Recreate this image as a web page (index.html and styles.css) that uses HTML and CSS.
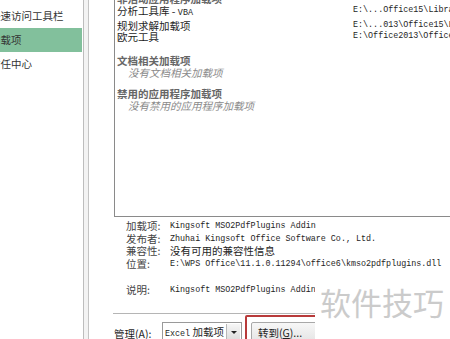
FILE: index.html
```html
<!DOCTYPE html>
<html lang="zh-CN">

<head>
    <meta charset="UTF-8" />
    <title>加载项</title>
    <link rel="stylesheet" href="styles.css">
</head>

<body>
    <div class="window">
        <div class="sidebar">
            <div class="nav-item">快速访问工具栏</div>
            <div class="nav-item active">加载项</div>
            <div class="nav-item">信任中心</div>
        </div>
        <div class="splitter"></div>

        <div class="main">
            <div class="addin-list">
                <div class="group-title">非活动应用程序加载项</div>
                <div class="row"><span>分析工具库 - <span class="mono">VBA</span></span><span class="mono">E:\...Office15\Library\Analysis</span></div>
                <div class="row"><span>规划求解加载项</span><span class="mono">E:\...013\Office15\Library</span></div>
                <div class="row"><span>欧元工具</span><span class="mono">E:\Office2013\Office15\Library</span></div>

                <div class="group-title spaced">文档相关加载项</div>
                <div class="empty">没有文档相关加载项</div>

                <div class="group-title spaced2">禁用的应用程序加载项</div>
                <div class="empty">没有禁用的应用程序加载项</div>
            </div>

            <div class="details">
                <span>加载项:</span><span class="mono">Kingsoft MSO2PdfPlugins Addin</span>
                <span>发布者:</span><span class="mono">Zhuhai Kingsoft Office Software Co., Ltd.</span>
                <span>兼容性:</span><span>没有可用的兼容性信息</span>
                <span>位置:</span><span class="mono">E:\WPS Office\11.1.0.11294\office6\kmso2pdfplugins.dll</span>
            </div>

            <div class="details desc">
                <span>说明:</span><span class="mono">Kingsoft MSO2PdfPlugins Addin</span>
            </div>

            <div class="separator"></div>

            <div class="manage">
                <span class="manage-label">管理(<u>A</u>):</span>
                <div class="select">
                    <span><span class="mono">Excel</span> 加载项</span>
                    <span class="arrow"></span>
                </div>
                <div class="highlight">
                    <button class="go-btn">转到(<u>G</u>)...</button>
                </div>
            </div>
        </div>

        <div class="watermark">软件技巧</div>
    </div>
</body>

</html>
```

FILE: styles.css
```css
body {
    margin: 0;
    background: #fff;
    font-family: "Noto Sans CJK SC", "DejaVu Sans", sans-serif;
    font-size: 10.5px;
    color: #1e1e1e;
}

.window {
    position: relative;
    display: flex;
    width: 450px;
    height: 339px;
    overflow: hidden;
}

.mono {
    font-family: "Liberation Mono", monospace;
    font-size: 8.4px;
}

/* left navigation */
.sidebar {
    width: 83px;
    flex-shrink: 0;
    border-right: 1px solid #bdbdbd;
    overflow: hidden;
    padding-top: 4px;
}

.nav-item {
    height: 24px;
    line-height: 24px;
    margin-left: -10px;
    white-space: nowrap;
    color: #333;
}

.nav-item.active {
    background: #82c09c;
    margin-right: 1px;
}

.splitter {
    width: 4px;
    flex-shrink: 0;
    background: #f3f3f3;
    border-right: 1px solid #c4c4c4;
}

/* main panel */
.main {
    flex: 1;
    min-width: 0;
    padding-left: 25px;
}

.addin-list {
    box-sizing: border-box;
    height: 225px;
    margin-top: -8px;
    padding: 1px 0 0 2px;
    border-left: 1px solid #8a8a8a;
    border-bottom: 1px solid #8a8a8a;
    white-space: nowrap;
}

.group-title {
    line-height: 12px;
    font-weight: bold;
    color: #666;
}

.group-title.spaced {
    margin-top: 12px;
}

.group-title.spaced2 {
    margin-top: 9px;
}

.row {
    display: grid;
    grid-template-columns: 236px 1fr;
    line-height: 11.5px;
}

.empty {
    line-height: 12px;
    padding-left: 11px;
    font-style: italic;
    color: #8a8a8a;
}

.details {
    display: grid;
    grid-template-columns: 44px 1fr;
    line-height: 12.7px;
    margin: 3px 0 0 12px;
    white-space: nowrap;
}

.details > span:nth-child(odd) {
    color: #444;
}

.details.desc {
    margin-top: 13px;
}

.separator {
    height: 1px;
    background: #b5b5b5;
    margin: 16px 0 0 -1px;
}

.manage {
    display: flex;
    align-items: flex-start;
}

.manage-label {
    margin-top: 12px;
    width: 48px;
}

u {
    text-decoration: underline;
}

.select {
    display: flex;
    align-items: center;
    justify-content: space-between;
    box-sizing: border-box;
    width: 80px;
    height: 20px;
    margin-top: 8px;
    padding-left: 2px;
    border: 1px solid #9a9a9a;
    background: #fff;
}

.arrow {
    width: 13px;
    height: 16px;
    margin-right: 1px;
    background: linear-gradient(#f6f6f6, #dcdcdc);
    border-left: 1px solid #b8b8b8;
    position: relative;
}

.arrow::after {
    content: "";
    position: absolute;
    left: 4px;
    top: 7px;
    border-left: 3px solid transparent;
    border-right: 3px solid transparent;
    border-top: 3px solid #222;
}

.highlight {
    margin: 1px 0 0 3px;
    padding: 5px 0 0 4px;
    border: 2px solid #b83a3a;
    border-radius: 2px;
    height: 40px;
}

.go-btn {
    width: 70px;
    height: 22px;
    padding: 0 0 0 6px;
    text-align: left;
    font-family: inherit;
    font-size: 10.5px;
    color: #222;
    border: 1px solid #a8a8a8;
    border-radius: 2px;
    background: linear-gradient(#f7f7f7, #e3e3e3);
}

.watermark {
    position: absolute;
    left: 315px;
    top: 272px;
    width: 135px;
    height: 67px;
    padding-left: 5px;
    background: #fff;
    font-size: 31px;
    line-height: 60px;
    color: #cbcbcb;
}
```
